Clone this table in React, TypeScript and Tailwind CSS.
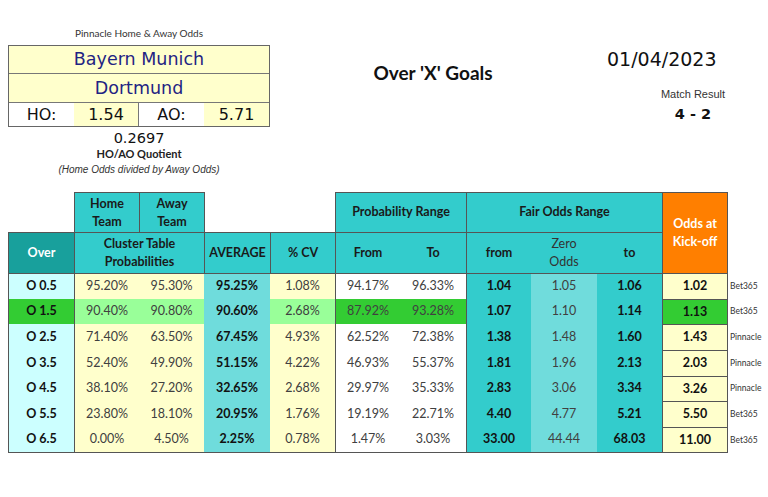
import React from "react";

const lato = { fontFamily: "Lato, 'Open Sans', sans-serif" };
const dejavu = { fontFamily: "'DejaVu Sans', Verdana, sans-serif" };
const arial = { fontFamily: "'Liberation Sans', Arial, sans-serif" };

type Row = {
  label: string;
  home: string;
  away: string;
  avg: string;
  cv: string;
  from: string;
  to: string;
  fFrom: string;
  zero: string;
  fTo: string;
  kick: string;
  book: string;
  green?: boolean;
  h: string;
};

const rows: Row[] = [
  { label: "O 0.5", home: "95.20%", away: "95.30%", avg: "95.25%", cv: "1.08%", from: "94.17%", to: "96.33%", fFrom: "1.04", zero: "1.05", fTo: "1.06", kick: "1.02", book: "Bet365", h: "h-[26px]" },
  { label: "O 1.5", home: "90.40%", away: "90.80%", avg: "90.60%", cv: "2.68%", from: "87.92%", to: "93.28%", fFrom: "1.07", zero: "1.10", fTo: "1.14", kick: "1.13", book: "Bet365", green: true, h: "h-[25px]" },
  { label: "O 2.5", home: "71.40%", away: "63.50%", avg: "67.45%", cv: "4.93%", from: "62.52%", to: "72.38%", fFrom: "1.38", zero: "1.48", fTo: "1.60", kick: "1.43", book: "Pinnacle", h: "h-[26px]" },
  { label: "O 3.5", home: "52.40%", away: "49.90%", avg: "51.15%", cv: "4.22%", from: "46.93%", to: "55.37%", fFrom: "1.81", zero: "1.96", fTo: "2.13", kick: "2.03", book: "Pinnacle", h: "h-[26px]" },
  { label: "O 4.5", home: "38.10%", away: "27.20%", avg: "32.65%", cv: "2.68%", from: "29.97%", to: "35.33%", fFrom: "2.83", zero: "3.06", fTo: "3.34", kick: "3.26", book: "Pinnacle", h: "h-[25px]" },
  { label: "O 5.5", home: "23.80%", away: "18.10%", avg: "20.95%", cv: "1.76%", from: "19.19%", to: "22.71%", fFrom: "4.40", zero: "4.77", fTo: "5.21", kick: "5.50", book: "Bet365", h: "h-[26px]" },
  { label: "O 6.5", home: "0.00%", away: "4.50%", avg: "2.25%", cv: "0.78%", from: "1.47%", to: "3.03%", fFrom: "33.00", zero: "44.44", fTo: "68.03", kick: "11.00", book: "Bet365", h: "h-[26px]" },
];

function DataRow({ r, first, last }: { r: Row; first: boolean; last: boolean }) {
  const t = first ? "border-t" : "";
  const b = last ? "border-b" : "";
  const base = `flex items-center justify-center border-[#555] ${t} ${b}`;
  return (
    <div className={`flex ${r.h}`}>
      <div className={`${base} w-[66px] border-l font-bold text-[#111] ${r.green ? "bg-[#33cc33]" : "bg-[#ccffff]"}`}>{r.label}</div>
      <div className={`${base} w-[65px] border-l text-[#404040] ${r.green ? "bg-[#99ff99]" : "bg-[#ffffcc]"}`}>{r.home}</div>
      <div className={`${base} w-[65px] text-[#404040] ${r.green ? "bg-[#99ff99]" : "bg-[#ffffcc]"}`}>{r.away}</div>
      <div className={`${base} w-[66px] font-bold text-[#111] bg-[#6fdcdc]`}>{r.avg}</div>
      <div className={`${base} w-[65px] text-[#404040] ${r.green ? "bg-[#99ff99]" : "bg-[#ffffcc]"}`}>{r.cv}</div>
      <div className={`${base} w-[65px] border-l text-[#404040] ${r.green ? "bg-[#33cc33]" : "bg-white"}`}>{r.from}</div>
      <div className={`${base} w-[66px] text-[#404040] ${r.green ? "bg-[#33cc33]" : "bg-white"}`}>{r.to}</div>
      <div className={`${base} w-[65px] border-l font-bold text-[#111] bg-[#33cccc]`}>{r.fFrom}</div>
      <div className={`${base} w-[66px] text-[#404040] bg-[#70dcdc]`}>{r.zero}</div>
      <div className={`${base} w-[65px] font-bold text-[#111] bg-[#33cccc]`}>{r.fTo}</div>
      <div className={`flex items-center justify-center w-[66px] border-t border-l border-r border-[#555] ${b} font-bold text-[#111] ${r.green ? "bg-[#33cc33]" : "bg-[#ffffcc]"}`}>{r.kick}</div>
      <div className="flex items-center pl-[2px] text-[8.5px] text-[#333]">{r.book}</div>
    </div>
  );
}

export default function App() {
  return (
    <div className="w-[768px] h-[497px] overflow-hidden bg-white">
      {/* Top section */}
      <div className="flex h-[192px]">
        <div className="ml-[8px] w-[262px] flex flex-col">
          <div className="pt-[27px] h-[45px] text-center text-[10px] leading-[13px] text-[#333]" style={lato}>
            Pinnacle Home &amp; Away Odds
          </div>
          <div className="border border-[#666] flex flex-col">
            <div className="h-[28px] bg-[#ffffcc] border-b border-[#777] flex items-center justify-center text-[17.5px] text-[#1f2483]" style={dejavu}>
              Bayern Munich
            </div>
            <div className="h-[29px] bg-[#ffffcc] border-b border-[#777] flex items-center justify-center text-[17.5px] text-[#1f2483]" style={dejavu}>
              Dortmund
            </div>
            <div className="h-[23px] flex text-[16px] text-[#111]" style={dejavu}>
              <div className="w-[65px] bg-white flex items-center justify-center">HO:</div>
              <div className="w-[65px] bg-[#ffffcc] border-r border-[#777] flex items-center justify-center">1.54</div>
              <div className="w-[65px] bg-white flex items-center justify-center">AO:</div>
              <div className="flex-1 bg-[#ffffcc] flex items-center justify-center">5.71</div>
            </div>
          </div>
          <div className="mt-[2px] text-center text-[14.5px] leading-[18px] text-[#111]" style={dejavu}>0.2697</div>
          <div className="text-center text-[11px] leading-[14px] font-bold text-[#222]" style={lato}>HO/AO Quotient</div>
          <div className="mt-[2px] text-center text-[10px] leading-[13px] italic text-[#333]" style={arial}>
            (Home Odds divided by Away Odds)
          </div>
        </div>
        <div className="w-[326px] pt-[61px] text-center">
          <span className="text-[19px] leading-[24px] font-bold text-[#111]" style={lato}>Over 'X' Goals</span>
        </div>
        <div className="flex-1 flex flex-col">
          <div className="pt-[47px] pl-[11px] text-[19px] leading-[24px] text-[#111]" style={dejavu}>01/04/2023</div>
          <div className="ml-[65px] w-[64px] mt-[17px] flex flex-col items-center">
            <div className="text-[11px] leading-[13px] text-[#333] whitespace-nowrap" style={arial}>Match Result</div>
            <div className="mt-[4px] text-[14.5px] leading-[18px] font-bold text-[#111] whitespace-nowrap" style={dejavu}>4 - 2</div>
          </div>
        </div>
      </div>

      {/* Table */}
      <div className="ml-[8px] flex flex-col text-[12.5px]" style={lato}>
        <div className="flex">
          <div className="flex flex-col">
            {/* Header row 1 */}
            <div className="flex h-[40px]">
              <div className="w-[66px]" />
              <div className="w-[65px] border-t border-l border-[#555] bg-[#33cccc] flex items-center justify-center text-center font-bold text-[#1a1a1a] leading-[18px]">
                Home<br />Team
              </div>
              <div className="w-[65px] border-t border-l border-[#555] bg-[#33cccc] flex items-center justify-center text-center font-bold text-[#1a1a1a] leading-[18px]">
                Away<br />Team
              </div>
              <div className="w-[131px] border-l border-[#555]" />
              <div className="w-[131px] border-t border-l border-[#555] bg-[#33cccc] flex items-center justify-center font-bold text-[#1a1a1a]">
                Probability Range
              </div>
              <div className="w-[196px] border-t border-l border-[#555] bg-[#33cccc] flex items-center justify-center font-bold text-[#1a1a1a]">
                Fair Odds Range
              </div>
            </div>
            {/* Header row 2 */}
            <div className="flex h-[41px]">
              <div className="w-[66px] border-t border-l border-[#555] bg-[#18a09c] flex items-center justify-center font-bold text-white">Over</div>
              <div className="w-[130px] border-t border-l border-[#555] bg-[#33cccc] flex items-center justify-center text-center font-bold text-[#1a1a1a] leading-[18px]">
                Cluster Table<br />Probabilities
              </div>
              <div className="w-[66px] border-t border-l border-[#555] bg-[#33cccc] flex items-center justify-center font-bold text-[#1a1a1a]">AVERAGE</div>
              <div className="w-[65px] border-t border-l border-[#555] bg-[#33cccc] flex items-center justify-center font-bold text-[#1a1a1a]">% CV</div>
              <div className="w-[65px] border-t border-l border-[#555] bg-[#33cccc] flex items-center justify-center font-bold text-[#1a1a1a]">From</div>
              <div className="w-[66px] border-t border-[#555] bg-[#33cccc] flex items-center justify-center font-bold text-[#1a1a1a]">To</div>
              <div className="w-[65px] border-t border-l border-[#555] bg-[#33cccc] flex items-center justify-center font-bold text-[#1a1a1a]">from</div>
              <div className="w-[66px] border-t border-[#555] bg-[#33cccc] flex items-center justify-center text-center text-[#333] leading-[18px]">
                Zero<br />Odds
              </div>
              <div className="w-[65px] border-t border-[#555] bg-[#33cccc] flex items-center justify-center font-bold text-[#1a1a1a]">to</div>
            </div>
          </div>
          <div className="w-[66px] h-[81px] border-t border-l border-r border-[#555] bg-[#ff7f00] flex items-center justify-center text-center font-bold text-white leading-[18px]">
            Odds at<br />Kick-off
          </div>
        </div>
        {rows.map((r, i) => (
          <DataRow key={r.label} r={r} first={i === 0} last={i === rows.length - 1} />
        ))}
      </div>
    </div>
  );
}
